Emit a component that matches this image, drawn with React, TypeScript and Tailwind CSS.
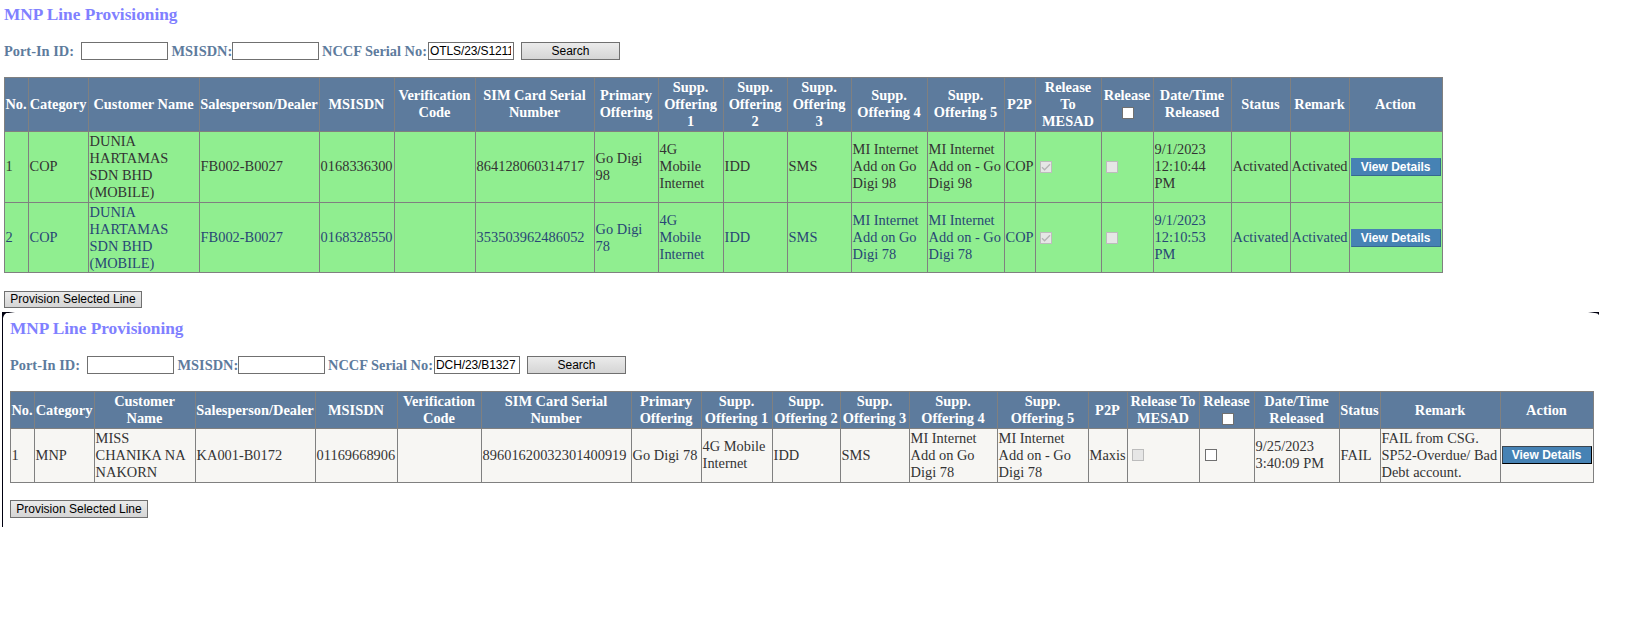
import type { ReactNode } from "react";

type Tone = "dark" | "navy" | "plain";

const TONES: Record<Tone, string> = {
  dark: "bg-[#90ee90] text-[#333333] pb-px",
  navy: "bg-[#90ee90] text-[#284775]",
  plain: "bg-[#f7f6f3] text-[#333333] pb-px",
};

function Check({ checked, disabled }: { checked?: boolean; disabled?: boolean }) {
  return (
    <span
      role="checkbox"
      aria-checked={!!checked}
      className={`flex h-3 w-3 shrink-0 items-center justify-center border ${
        disabled ? "border-[#bcbcbc] bg-[#e6e6e6]" : "border-[#707070] bg-white"
      }`}
    >
      {checked && (
        <svg viewBox="0 0 10 10" className="h-[10px] w-[10px]" fill="none" stroke="#b4b4b4" strokeWidth="1.3">
          <path d="M1 5.2 L3.6 7.8 L9 2.2" />
        </svg>
      )}
    </span>
  );
}

function Field({ value, className }: { value?: string; className: string }) {
  return (
    <input
      readOnly
      value={value ?? ""}
      className={`h-[18px] shrink-0 border border-[#707070] bg-white pr-[2px] pl-px font-['Liberation_Sans',sans-serif] text-[12px] leading-[14px] font-normal tracking-[-0.1px] text-black outline-none ${className}`}
    />
  );
}

function GrayButton({ children, className }: { children: ReactNode; className: string }) {
  return (
    <button
      className={`flex shrink-0 items-center justify-center border border-[#707070] bg-linear-to-b from-[#ebebeb] to-[#d5d5d5] pb-px font-['Liberation_Sans',sans-serif] text-[12px] leading-[14px] font-normal whitespace-nowrap text-black ${className}`}
    >
      {children}
    </button>
  );
}

function ViewDetails({ framed }: { framed?: boolean }) {
  return (
    <button
      className={`flex w-[90px] shrink-0 items-center justify-center border bg-[#4682b4] pb-px font-['Liberation_Sans',sans-serif] text-[12px] leading-[14px] font-bold whitespace-nowrap text-white ${
        framed
          ? "h-[18px] border-t-[#3b4650] border-r-black border-b-black border-l-[#3b4650]"
          : "mt-px h-[18px] border-t-[#4682b4] border-r-[#35688f] border-b-[#35688f] border-l-[#4682b4]"
      }`}
    >
      View Details
    </button>
  );
}

function SearchBar({ serial }: { serial: string }) {
  return (
    <div className="flex h-[18px] items-center text-[14.4px] font-bold whitespace-pre text-[#5d7b9d]">
      <span className="w-[77px] shrink-0">Port-In ID:</span>
      <Field className="w-[87px]" />
      <span className="w-[64px] shrink-0 pl-[3.5px]">MSISDN:</span>
      <Field className="w-[87px]" />
      <span className="w-[109px] shrink-0 pl-[3px]">NCCF Serial No:</span>
      <Field className="w-[86px]" value={serial} />
      <GrayButton className="ml-[7px] h-[18px] w-[99px]">Search</GrayButton>
    </div>
  );
}

function Header({ labels, className }: { labels: string[]; className: string }) {
  return (
    <>
      {labels.map((label, i) => (
        <div
          key={i}
          className={`flex min-w-0 flex-col items-center justify-center bg-[#5d7b9d] pr-px text-center font-bold whitespace-pre text-white ${className}`}
        >
          {label}
          {label === "Release" && (
            <span className="flex h-[17px] items-start pt-[3px] pl-[2px]">
              <Check />
            </span>
          )}
        </div>
      ))}
    </>
  );
}

function Row({ cells, tone }: { cells: ReactNode[]; tone: Tone }) {
  return (
    <>
      {cells.map((cell, i) => (
        <div key={i} className={`flex min-w-0 items-center pl-[0.6px] whitespace-pre ${TONES[tone]}`}>
          {cell}
        </div>
      ))}
    </>
  );
}

const HEADERS_A = [
  "No.", "Category", "Customer Name", "Salesperson/Dealer", "MSISDN", "Verification\nCode",
  "SIM Card Serial\nNumber", "Primary\nOffering", "Supp.\nOffering\n1", "Supp.\nOffering\n2",
  "Supp.\nOffering\n3", "Supp.\nOffering 4", "Supp.\nOffering 5", "P2P", "Release\nTo\nMESAD",
  "Release", "Date/Time\nReleased", "Status", "Remark", "Action",
];

const HEADERS_B = [
  "No.", "Category", "Customer\nName", "Salesperson/Dealer", "MSISDN", "Verification\nCode",
  "SIM Card Serial\nNumber", "Primary\nOffering", "Supp.\nOffering 1", "Supp.\nOffering 2",
  "Supp.\nOffering 3", "Supp.\nOffering 4", "Supp.\nOffering 5", "P2P", "Release To\nMESAD",
  "Release", "Date/Time\nReleased", "Status", "Remark", "Action",
];

const Boxed = ({ children }: { children: ReactNode }) => <span className="pl-[3.4px]">{children}</span>;

function activatedRow(no: string, msisdn: string, sim: string, plan: string, time: string): ReactNode[] {
  return [
    no, "COP", "DUNIA\nHARTAMAS\nSDN BHD\n(MOBILE)", "FB002-B0027", msisdn, "", sim,
    `Go Digi\n${plan}`, "4G\nMobile\nInternet", "IDD", "SMS",
    `MI Internet\nAdd on Go\nDigi ${plan}`, `MI Internet\nAdd on - Go\nDigi ${plan}`, "COP",
    <span className="pt-px pl-[3.4px]"><Check checked disabled /></span>,
    <span className="pt-px pl-[3.4px]"><Check disabled /></span>,
    `9/1/2023\n${time}\nPM`, "Activated", "Activated", <ViewDetails />,
  ];
}

const FAILED_ROW: ReactNode[] = [
  "1", "MNP", "MISS\nCHANIKA NA\nNAKORN", "KA001-B0172", "01169668906", "", "89601620032301400919",
  "Go Digi 78", "4G Mobile\nInternet", "IDD", "SMS", "MI Internet\nAdd on Go\nDigi 78",
  "MI Internet\nAdd on - Go\nDigi 78", "Maxis", <Boxed><Check disabled /></Boxed>,
  <span className="pl-[4.4px]"><Check /></span>,
  "9/25/2023\n3:40:09 PM", "FAIL", "FAIL from CSG.\nSP52-Overdue/ Bad\nDebt account.", <ViewDetails framed />,
];

const Title = () => (
  <h1 className="h-[42px] pt-[5px] text-[17.3px] leading-[20px] font-bold text-[#8080ff]">MNP Line Provisioning</h1>
);

export default function App() {
  return (
    <main className="h-[630px] w-[1634px] overflow-hidden bg-white font-['Liberation_Serif',serif] text-[14.4px] leading-[17px]">
      <section className="h-[312px] pl-[4px]">
        <Title />
        <SearchBar serial="OTLS/23/S1211" />
        <div className="mt-[17px] grid w-[1439px] grid-cols-[23px_59px_110px_119px_74px_80px_118px_63px_64px_63px_63px_75px_76px_30px_65px_51px_77px_58px_58px_92px] grid-rows-[53px_70px_69px] gap-px bg-[#808080] p-px">
          <Header labels={HEADERS_A} className="pb-px" />
          <Row tone="dark" cells={activatedRow("1", "0168336300", "864128060314717", "98", "12:10:44")} />
          <Row tone="navy" cells={activatedRow("2", "0168328550", "353503962486052", "78", "12:10:53")} />
        </div>
        <GrayButton className="mt-[18px] h-[17px] w-[138px]">Provision Selected Line</GrayButton>
      </section>
      <section className="relative ml-[2px] h-[215px] w-[1597px] border-l border-[#000010] pt-[2px] pl-[7px]">
        <div className="absolute top-0 -left-px h-px w-[13px] bg-linear-to-r from-[#000010] from-50% to-transparent" />
        <svg className="absolute top-0 left-0 h-[6px] w-[6px]" viewBox="0 0 6 6">
          <path d="M0 0H6Q1 1 0 6Z" fill="#000010" />
        </svg>
        <div className="absolute top-0 right-0 h-px w-[11px] bg-linear-to-l from-[#000010] from-40% to-transparent" />
        <svg className="absolute top-0 right-0 h-[3px] w-[4px]" viewBox="0 0 4 3">
          <path d="M0 0H4V3Q3 1 0 1Z" fill="#000010" />
        </svg>
        <Title />
        <SearchBar serial="DCH/23/B1327" />
        <div className="mt-[17px] grid w-[1584px] grid-cols-[23px_59px_100px_119px_81px_83px_149px_69px_70px_67px_68px_87px_90px_38px_71px_54px_84px_40px_119px_92px] grid-rows-[36px_53px] gap-px bg-[#808080] p-px">
          <Header labels={HEADERS_B} className="pb-0" />
          <Row tone="plain" cells={FAILED_ROW} />
        </div>
        <GrayButton className="mt-[17px] h-[18px] w-[138px]">Provision Selected Line</GrayButton>
      </section>
    </main>
  );
}
